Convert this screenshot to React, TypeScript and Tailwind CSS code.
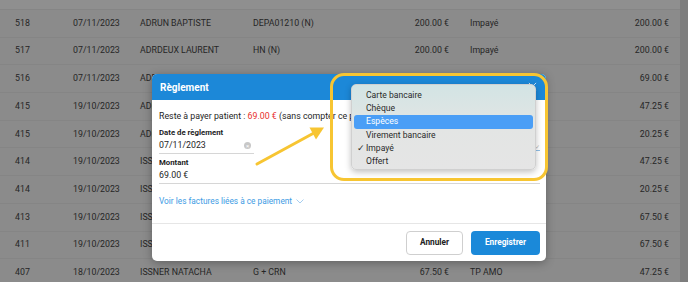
import React from "react";

interface Row {
  id: string;
  date: string;
  name: string;
  code: string;
  amount: string;
  status: string;
  total: string;
}

const rows: Row[] = [
  { id: "518", date: "07/11/2023", name: "ADRUN BAPTISTE", code: "DEPA01210 (N)", amount: "200.00 €", status: "Impayé", total: "200.00 €" },
  { id: "517", date: "07/11/2023", name: "ADRDEUX LAURENT", code: "HN (N)", amount: "200.00 €", status: "Impayé", total: "200.00 €" },
  { id: "516", date: "07/11/2023", name: "ADRDEUX LAURENT", code: "", amount: "", status: "", total: "69.00 €" },
  { id: "415", date: "19/10/2023", name: "ADRUN BAPTISTE", code: "", amount: "", status: "", total: "47.25 €" },
  { id: "415", date: "19/10/2023", name: "ADRUN BAPTISTE", code: "", amount: "", status: "", total: "20.25 €" },
  { id: "414", date: "19/10/2023", name: "ISSNER NATACHA", code: "", amount: "", status: "", total: "47.25 €" },
  { id: "414", date: "19/10/2023", name: "ISSNER NATACHA", code: "", amount: "", status: "", total: "20.25 €" },
  { id: "413", date: "19/10/2023", name: "ISSNER NATACHA", code: "", amount: "", status: "", total: "67.50 €" },
  { id: "411", date: "19/10/2023", name: "ISSNER NATACHA", code: "", amount: "", status: "", total: "67.50 €" },
  { id: "407", date: "18/10/2023", name: "ISSNER NATACHA", code: "G + CRN", amount: "67.50 €", status: "TP AMO", total: "47.25 €" },
];

const options = ["Carte bancaire", "Chèque", "Espèces", "Virement bancaire", "Impayé", "Offert"];

export default function App() {
  return (
    <div className="relative w-[688px] h-[282px] overflow-hidden bg-[#7d7d7d] font-['Roboto',sans-serif]">
      {/* Table behind the overlay */}
      <div className="w-[680px] bg-[#8b8b8b] text-[8.8px] text-[#262626]">
        <div className="h-[10px] bg-[#8f8f8f] border-b border-[#858585]" />
        {rows.map((r, i) => (
          <div key={i} className="flex items-center h-[27.7px] border-b border-[#858585] pl-[15px]">
            <div className="w-[58px]">{r.id}</div>
            <div className="w-[67px]">{r.date}</div>
            <div className="w-[113px]">{r.name}</div>
            <div className="w-[196px] flex justify-between">
              <span>{r.code}</span>
              <span>{r.amount}</span>
            </div>
            <div className="w-[220px] flex justify-between pl-[21px]">
              <span>{r.status}</span>
              <span>{r.total}</span>
            </div>
          </div>
        ))}
      </div>

      {/* Modal */}
      <div className="absolute left-[152px] top-[74px] w-[394px] h-[187px] bg-white rounded-[5px] shadow-[0_2px_10px_rgba(0,0,0,0.3)] overflow-hidden flex flex-col">
        <div className="h-[26px] bg-[#1c88d8] flex items-center justify-between px-[8px]">
          <span className="text-white font-bold text-[10px]">Règlement</span>
          <svg width="9" height="9" viewBox="0 0 10 10" className="mr-[1px] mb-[2px]">
            <path d="M1 1 L9 9 M9 1 L1 9" stroke="#cfe6f7" strokeWidth="1.1" />
          </svg>
        </div>
        <div className="relative flex-1 px-[7px] text-[#1e1e1e] text-[8.8px]">
          <div className="mt-[10px] h-[12px] leading-[12px] whitespace-nowrap">
            Reste à payer patient : <span className="text-[#e8302c]">69.00 €</span> (sans compter ce paiement)
          </div>
          <div className="mt-[6px] h-[10px] font-bold text-[7.8px] leading-[10px]">Date de règlement</div>
          <div className="w-[95px] h-[16px] flex items-center justify-between border-b border-[#d6d6d6]">
            <span>07/11/2023</span>
            <span className="w-[7px] h-[7px] mr-[3px] rounded-full bg-[#c8c8c8] flex items-center justify-center text-white text-[6px] leading-none">×</span>
          </div>
          <div className="mt-[4px] h-[10px] font-bold text-[7.8px] leading-[10px]">Montant</div>
          <div className="w-[381px] h-[16px] flex items-center border-b border-[#d6d6d6]">69.00 €</div>
          <div className="mt-[12px] h-[10px] flex items-center gap-[4px] text-[#3c9be4] text-[8.3px]">
            Voir les factures liées à ce paiement
            <svg width="8" height="5" viewBox="0 0 8 5">
              <path d="M0.5 0.5 L4 4 L7.5 0.5" stroke="#9cc8ee" strokeWidth="0.9" fill="none" />
            </svg>
          </div>
          <div className="absolute right-[6px] top-[44px] w-[10px] border-b border-[#8fbfe8] text-[#b0b0b0] text-[6px] leading-[6px] text-right">✓</div>
        </div>
        <div className="h-[38px] border-t border-[#e6e6e6] flex items-center justify-end gap-[8px] pr-[6px]">
          <button className="w-[57px] h-[24px] rounded-[4px] border border-[#cfcfcf] bg-white text-[#222] font-bold text-[8.3px]">
            Annuler
          </button>
          <button className="w-[69px] h-[24px] rounded-[4px] bg-[#1b89d9] text-white font-bold text-[8.3px]">
            Enregistrer
          </button>
        </div>
      </div>

      {/* Native select dropdown */}
      <div className="absolute left-[351px] top-[84px] w-[185px] h-[86px] rounded-[5px] bg-gradient-to-b from-[#d2e4e4] via-[#e3e5e4] to-[#e5e5e5] shadow-[0_2px_6px_rgba(0,0,0,0.25)] border border-[#d0d0d0] pt-[4px] px-[2px] text-[8.6px] text-[#2a2a2a]">
        {options.map((o, i) => (
          <div
            key={o}
            className={
              i === 2
                ? "relative h-[13.2px] leading-[13.2px] pl-[12px] rounded-[3px] bg-[#4a9ef6] text-white"
                : "relative h-[13.2px] leading-[13.2px] pl-[12px]"
            }
          >
            {i === 4 && <span className="absolute left-[3px] top-0">✓</span>}
            {o}
          </div>
        ))}
      </div>

      {/* Annotation frame and arrow */}
      <div className="absolute left-[330px] top-[73px] w-[218px] h-[108px] rounded-[14px] border-[3px] border-[#f7c532]" />
      <svg className="absolute left-0 top-0 pointer-events-none" width="688" height="282" viewBox="0 0 688 282">
        <line x1="257" y1="164" x2="313" y2="133.5" stroke="#f7c532" strokeWidth="3" strokeLinecap="round" />
        <polygon points="324,127.5 316,139.5 309.5,127.5" fill="#f7c532" />
      </svg>
    </div>
  );
}
